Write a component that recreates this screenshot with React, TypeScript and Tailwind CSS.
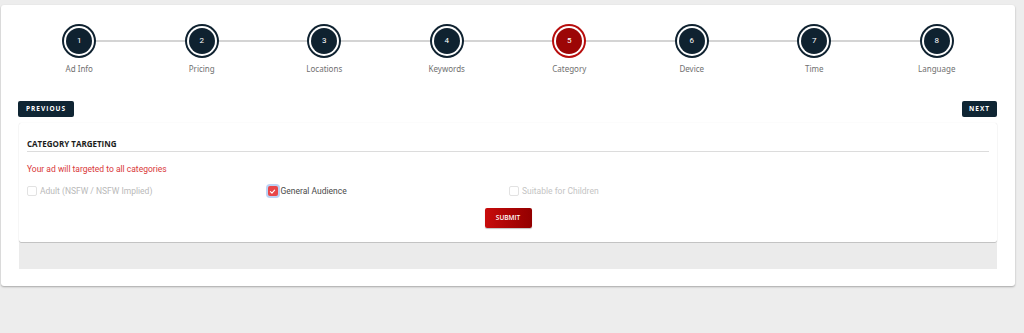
import React from "react";

const steps = ["Ad Info", "Pricing", "Locations", "Keywords", "Category", "Device", "Time", "Language"];

function Step({ n, label, active, first, last }: { n: number; label: string; active: boolean; first: boolean; last: boolean }) {
  return (
    <div className="relative flex flex-col items-center">
      <div className="relative flex h-[34px] w-full items-center justify-center">
        {!first && <div className="absolute left-0 right-1/2 top-[16px] h-[2px] bg-[#d4d4d4]" />}
        {!last && <div className="absolute left-1/2 right-0 top-[16px] h-[2px] bg-[#d4d4d4]" />}
        <div
          className={`relative z-10 flex h-[34px] w-[34px] items-center justify-center rounded-full p-[2px] ${
            active ? "bg-[#b80d0d]" : "bg-[#0f2230]"
          }`}
        >
          <div className="flex h-full w-full items-center justify-center rounded-full bg-white p-[2px]">
            <div
              className={`flex h-full w-full items-center justify-center rounded-full text-[8px] text-white ${
                active ? "bg-[#9c0606]" : "bg-[#0f2230]"
              }`}
            >
              {n}
            </div>
          </div>
        </div>
      </div>
      <div className="mt-[5px] text-[8px] text-[#707070]" style={{ fontFamily: '"Noto Sans", sans-serif' }}>
        {label}
      </div>
    </div>
  );
}

function Checkbox({ checked }: { checked?: boolean }) {
  if (checked) {
    return (
      <div className="flex h-[10px] w-[10px] items-center justify-center rounded-[2px] bg-[#e8474a] ring-2 ring-[#bcd3f5]">
        <svg width="7" height="7" viewBox="0 0 10 10">
          <path d="M2 5.2 L4.2 7.3 L8 3" stroke="white" strokeWidth="1.6" fill="none" strokeLinecap="round" strokeLinejoin="round" />
        </svg>
      </div>
    );
  }
  return <div className="h-[10px] w-[10px] rounded-[2px] border border-[#e2e2e2] bg-white" />;
}

export default function App() {
  return (
    <div className="min-h-[333px] w-full bg-[#ededed] pt-[5px]" style={{ fontFamily: "Roboto, sans-serif" }}>
      <div className="ml-[1px] w-[1014px] rounded-[3px] bg-white px-[17px] pb-[17px] pt-[19px] shadow-[0_1px_2px_rgba(0,0,0,0.3)]">
        <div className="grid grid-cols-8">
          {steps.map((s, i) => (
            <Step key={s} n={i + 1} label={s} active={i === 4} first={i === 0} last={i === steps.length - 1} />
          ))}
        </div>

        <div className="mt-[26px] flex items-center justify-between" style={{ fontFamily: '"Open Sans", sans-serif' }}>
          <button className="h-[16px] rounded-[2px] bg-[#0f2533] px-[8px] text-[6.5px] font-bold tracking-[1px] text-white">
            PREVIOUS
          </button>
          <button className="mr-[1px] h-[16px] rounded-[2px] bg-[#0f2533] px-[7px] text-[6.5px] font-bold tracking-[1px] text-white">
            NEXT
          </button>
        </div>

        <div className="mx-[1px] mt-[6px] rounded-[2px] bg-white px-[8px] pb-[14px] pt-[15px] shadow-[0_0_1px_rgba(0,0,0,0.15),0_1px_1px_rgba(0,0,0,0.25)]">
          <div
            className="border-b border-[#dcdcdc] pb-[1px] text-[8px] font-bold text-[#1c1c1c]"
            style={{ fontFamily: '"Open Sans", sans-serif' }}
          >
            CATEGORY TARGETING
          </div>
          <div className="mt-[11px] text-[8.5px] text-[#d9383a]">Your ad will targeted to all categories</div>
          <div className="mt-[9px] grid grid-cols-4 text-[8.5px]">
            <div className="flex items-center gap-[3px]">
              <Checkbox />
              <span className="text-[#b9b9b9]">Adult (NSFW / NSFW Implied)</span>
            </div>
            <div className="flex items-center gap-[3px]">
              <Checkbox checked />
              <span className="text-[#4a4a4a]">General Audience</span>
            </div>
            <div className="flex items-center gap-[3px] pl-[1px]">
              <Checkbox />
              <span className="text-[#c4c4c4]">Suitable for Children</span>
            </div>
            <div />
          </div>
          <div className="mt-[10px] flex justify-center">
            <button
              className="h-[20px] w-[47px] rounded-[2px] bg-gradient-to-r from-[#c80c0c] to-[#930000] text-[6.5px] font-semibold text-white shadow-[0_1px_1px_rgba(0,0,0,0.25)]"
              style={{ fontFamily: '"Open Sans", sans-serif' }}
            >
              SUBMIT
            </button>
          </div>
        </div>
        <div className="mx-[1px] mt-[1px] h-[26px] bg-[#ebebeb]" />
      </div>
    </div>
  );
}
